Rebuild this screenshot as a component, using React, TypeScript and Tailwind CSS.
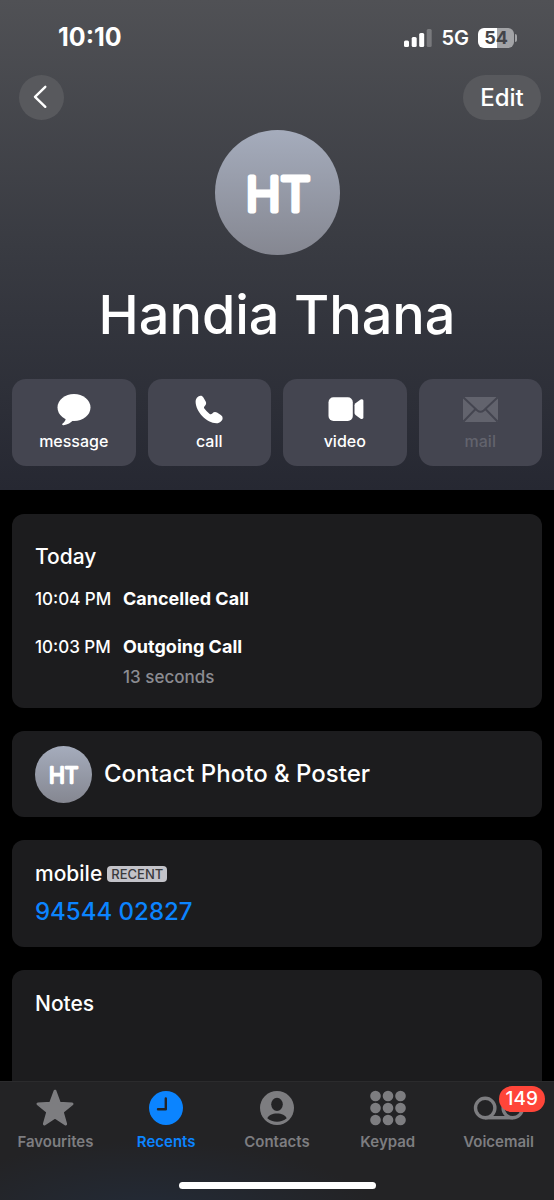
import type { ReactNode } from "react";

interface Action {
  label: string;
  icon: ReactNode;
  disabled?: boolean;
}

interface Tab {
  label: string;
  icon: ReactNode;
  active?: boolean;
  badge?: number;
}

interface CallEntry {
  time: string;
  kind: string;
  duration?: string;
}

const actions: Action[] = [
  {
    label: "message",
    icon: (
      <>
        <ellipse cx="18" cy="16.5" rx="16.5" ry="13.4" />
        <path d="M9.5 25C10.5 29 8.5 31 6.4 32.8C5.8 33.8 6.4 34.4 7.6 34.2C11.5 33.8 15 31.5 17.5 29Z" />
      </>
    ),
  },
  {
    label: "call",
    icon: (
      <path d="M9.5 4.8C7 5 4.6 7.5 4.6 11C5 21 15.5 32 25.5 32.2C29 32.2 31.6 29.5 31.6 27.2C31.6 25.6 31 24.9 29.8 24L26 21.6C24.3 20.6 22.6 21 21.3 22.4C20.3 23.4 19.6 23.5 18.4 22.7C16.5 21.3 14.8 19.6 13.5 17.8C12.8 16.7 12.8 16 13.8 15C15 13.8 15.6 12.3 14.7 10.6L12.4 6.6C11.6 5.3 10.7 4.7 9.5 4.8Z" />
    ),
  },
  {
    label: "video",
    icon: (
      <>
        <rect x="1.5" y="6.3" width="24.3" height="23.7" rx="5" />
        <path d="M27.5 14.2Q27.5 13 28.5 12.2L33.6 8.5Q34.2 8.1 35 8.2Q36.4 8.4 36.4 9.8V26.4Q36.4 27.8 35 28Q34.2 28.1 33.6 27.7L28.5 24Q27.5 23.2 27.5 22Z" />
      </>
    ),
  },
  {
    label: "mail",
    disabled: true,
    icon: (
      <>
        <rect x="1" y="6" width="35" height="25" rx="2.5" />
        <path
          d="M1.5 6.5L15.3 19.4Q18.5 22.2 21.7 19.4L35.5 6.5M1.5 30.5L13.6 18M35.5 30.5L23.4 18"
          fill="none"
          stroke="#444550"
          strokeWidth="2"
        />
      </>
    ),
  },
];

const calls: CallEntry[] = [
  { time: "10:04 PM", kind: "Cancelled Call" },
  { time: "10:03 PM", kind: "Outgoing Call", duration: "13 seconds" },
];

const tabs: Tab[] = [
  {
    label: "Favourites",
    icon: (
      <path
        d="M20 3.2L24.4 15.3L37 15.9L27.2 23.8L30.6 36L20 29L9.4 36L12.8 23.8L3 15.9L15.6 15.3Z"
        stroke="currentColor"
        strokeWidth="3"
        strokeLinejoin="round"
      />
    ),
  },
  {
    label: "Recents",
    active: true,
    icon: (
      <>
        <circle cx="20" cy="20" r="17" />
        <path d="M19.8 10.4V21.2H12" fill="none" stroke="#232427" strokeWidth="2.4" strokeLinecap="round" strokeLinejoin="round" />
      </>
    ),
  },
  {
    label: "Contacts",
    icon: (
      <>
        <circle cx="20" cy="20" r="17" />
        <ellipse cx="20" cy="16.3" rx="5.8" ry="6.6" fill="#232325" />
        <path d="M10.3 30.3C11.4 27.4 15.4 25.6 20 25.6C24.6 25.6 28.6 27.4 29.7 30.3C27.2 32.6 23.8 33.8 20 33.8C16.2 33.8 12.8 32.6 10.3 30.3Z" fill="#232325" />
      </>
    ),
  },
  {
    label: "Keypad",
    icon: [8, 20, 32].map((cy) =>
      [7.5, 20, 32.5].map((cx) => <circle key={`${cx}-${cy}`} cx={cx} cy={cy} r="5.3" />)
    ),
  },
  {
    label: "Voicemail",
    badge: 149,
    icon: (
      <g fill="none" stroke="currentColor" strokeWidth="3.4">
        <circle cx="6.2" cy="20" r="9.7" />
        <circle cx="33.8" cy="20" r="9.7" />
        <path d="M6 29.7H34" />
      </g>
    ),
  },
];

const Avatar = ({ className, id }: { className: string; id: string }) => (
  <svg viewBox="0 0 125 125" className={className} role="img" aria-label="Handia Thana">
    <defs>
      <linearGradient id={id} x1="0" y1="0" x2="0" y2="1">
        <stop offset="0" stopColor="#a5acbc" />
        <stop offset="1" stopColor="#858791" />
      </linearGradient>
    </defs>
    <circle cx="62.5" cy="62.5" r="62.5" fill={`url(#${id})`} />
    <text
      x="63"
      y="81"
      textAnchor="middle"
      fontSize="47"
      fontWeight="300"
      fill="#fff"
      stroke="#fff"
      strokeWidth="5"
      strokeLinejoin="round"
    >
      HT
    </text>
  </svg>
);

const StatusBar = () => (
  <div className="flex h-[75px] items-center justify-between pr-[37px] pl-[58px]">
    <span className="text-[25px] font-bold">10:10</span>
    <div className="flex items-center gap-[9px]">
      <svg viewBox="0 0 28 18" className="h-[18px] w-7" fill="currentColor" aria-hidden="true">
        <rect x="0" y="11.5" width="5" height="6.5" rx="1.5" />
        <rect x="7.7" y="8" width="5" height="10" rx="1.5" />
        <rect x="15.2" y="4" width="5" height="14" rx="1.5" />
        <rect x="22.7" y="0" width="5" height="18" rx="1.5" opacity="0.25" />
      </svg>
      <span className="text-xl font-semibold">5G</span>
      <div className="flex items-center gap-px">
        <span className="flex h-5 w-9 items-center justify-center rounded-md bg-linear-to-r from-white from-54% to-[#a2a3a6] to-54% text-lg font-bold text-[#434448]">
          54
        </span>
        <span className="h-2 w-0.5 rounded-r-full bg-[#a2a3a6]" />
      </div>
    </div>
  </div>
);

const Card = ({ children, className = "" }: { children: ReactNode; className?: string }) => (
  <section className={`rounded-[12px] bg-[#1c1c1e] px-[23px] ${className}`}>{children}</section>
);

const App = () => {
  return (
    <div className="flex h-screen flex-col overflow-hidden bg-black font-['Inter','Liberation_Sans',sans-serif] text-white">
      <main className="min-h-0 flex-1 overflow-hidden">
        <header className="bg-linear-to-b from-[#505155] via-[#393b42] via-50% to-[#262832] pb-6">
          <StatusBar />
          <div className="flex items-center justify-between pr-[13px] pl-[19px]">
            <button aria-label="Back" className="flex size-[45px] items-center justify-center rounded-full bg-[#58595d]">
              <svg viewBox="0 0 45 45" className="size-full" fill="none" stroke="currentColor" strokeWidth="2.4" strokeLinecap="round" strokeLinejoin="round">
                <path d="M26.3 11.8L16 21.8L26.3 31.8" />
              </svg>
            </button>
            <button className="h-[45px] w-[78px] rounded-full bg-[#58595d] text-2xl font-medium">Edit</button>
          </div>

          <Avatar id="avatar-large" className="mx-auto mt-[10px] size-[125px]" />
          <h1 className="mt-7 text-center text-[54px] leading-[64px] font-medium">Handia Thana</h1>

          <div className="mt-8 grid grid-cols-4 gap-3 px-3">
            {actions.map(({ label, icon, disabled }) => (
              <button
                key={label}
                disabled={disabled}
                className="flex h-[87px] flex-col items-center gap-1 rounded-[14px] bg-[#444550] pt-3 text-base leading-5 font-medium disabled:text-[#62636d]"
              >
                <svg viewBox="0 0 36 36" className="size-9 overflow-visible" fill="currentColor" aria-hidden="true">
                  {icon}
                </svg>
                {label}
              </button>
            ))}
          </div>
        </header>

        <div className="flex flex-col gap-[23px] px-3 pt-6">
          <Card className="pt-[29px] pb-[19px]">
            <h2 className="text-[21px] leading-7 font-medium">Today</h2>
            <ul className="mt-4 flex flex-col gap-6 leading-6">
              {calls.map(({ time, kind, duration }) => (
                <li key={time} className="flex">
                  <span className="w-[88px] text-[17px] leading-6 font-medium whitespace-nowrap">{time}</span>
                  <div>
                    <p className="text-lg leading-6 font-bold">{kind}</p>
                    {duration && <p className="mt-1.5 text-[17px] leading-6 font-medium text-[#8c8c92]">{duration}</p>}
                  </div>
                </li>
              ))}
            </ul>
          </Card>

          <Card className="flex min-h-[86px] items-center gap-3">
            <Avatar id="avatar-small" className="size-[57px] shrink-0" />
            <span className="text-2xl font-medium">Contact Photo &amp; Poster</span>
          </Card>

          <Card className="pt-5 pb-[19px]">
            <div className="flex items-center gap-[5px] text-[21px] leading-7 font-medium">
              mobile
              <span className="rounded-sm bg-[#c3c3c9] px-1 text-[13px] leading-4 text-[#3a3a3d]">RECENT</span>
            </div>
            <a href="tel:9454402827" className="mt-2 block text-2xl leading-8 font-medium text-[#0b84ff]">
              94544 02827
            </a>
          </Card>

          <Card className="h-[140px] pt-5">
            <h2 className="text-[21px] leading-7 font-medium">Notes</h2>
          </Card>
        </div>
      </main>

      <nav className="shrink-0 border-t border-[#2b2b2d] bg-[#232325] bg-radial-[at_27%_115%] from-[#232b38] to-[#232325] to-40% pb-[11px]">
        <div className="grid grid-cols-5 pt-1.5">
          {tabs.map(({ label, icon, active, badge }) => (
            <button
              key={label}
              className={`relative flex flex-col items-center gap-1 text-[15px] leading-5 font-semibold ${
                active ? "text-[#0b84ff]" : "text-[#7d7d80]"
              }`}
            >
              <svg viewBox="0 0 40 40" className="size-10 overflow-visible" fill="currentColor" aria-hidden="true">
                {icon}
              </svg>
              {label}
              {badge && (
                <span className="absolute -top-0.5 left-1/2 h-[26px] rounded-full bg-[#ff4539] px-[7px] text-[19px] leading-[26px] font-medium text-white">
                  {badge}
                </span>
              )}
            </button>
          ))}
        </div>
        <div className="mx-auto mt-[30px] h-[7px] w-[197px] rounded-full bg-white" />
      </nav>
    </div>
  );
};

export default App;
